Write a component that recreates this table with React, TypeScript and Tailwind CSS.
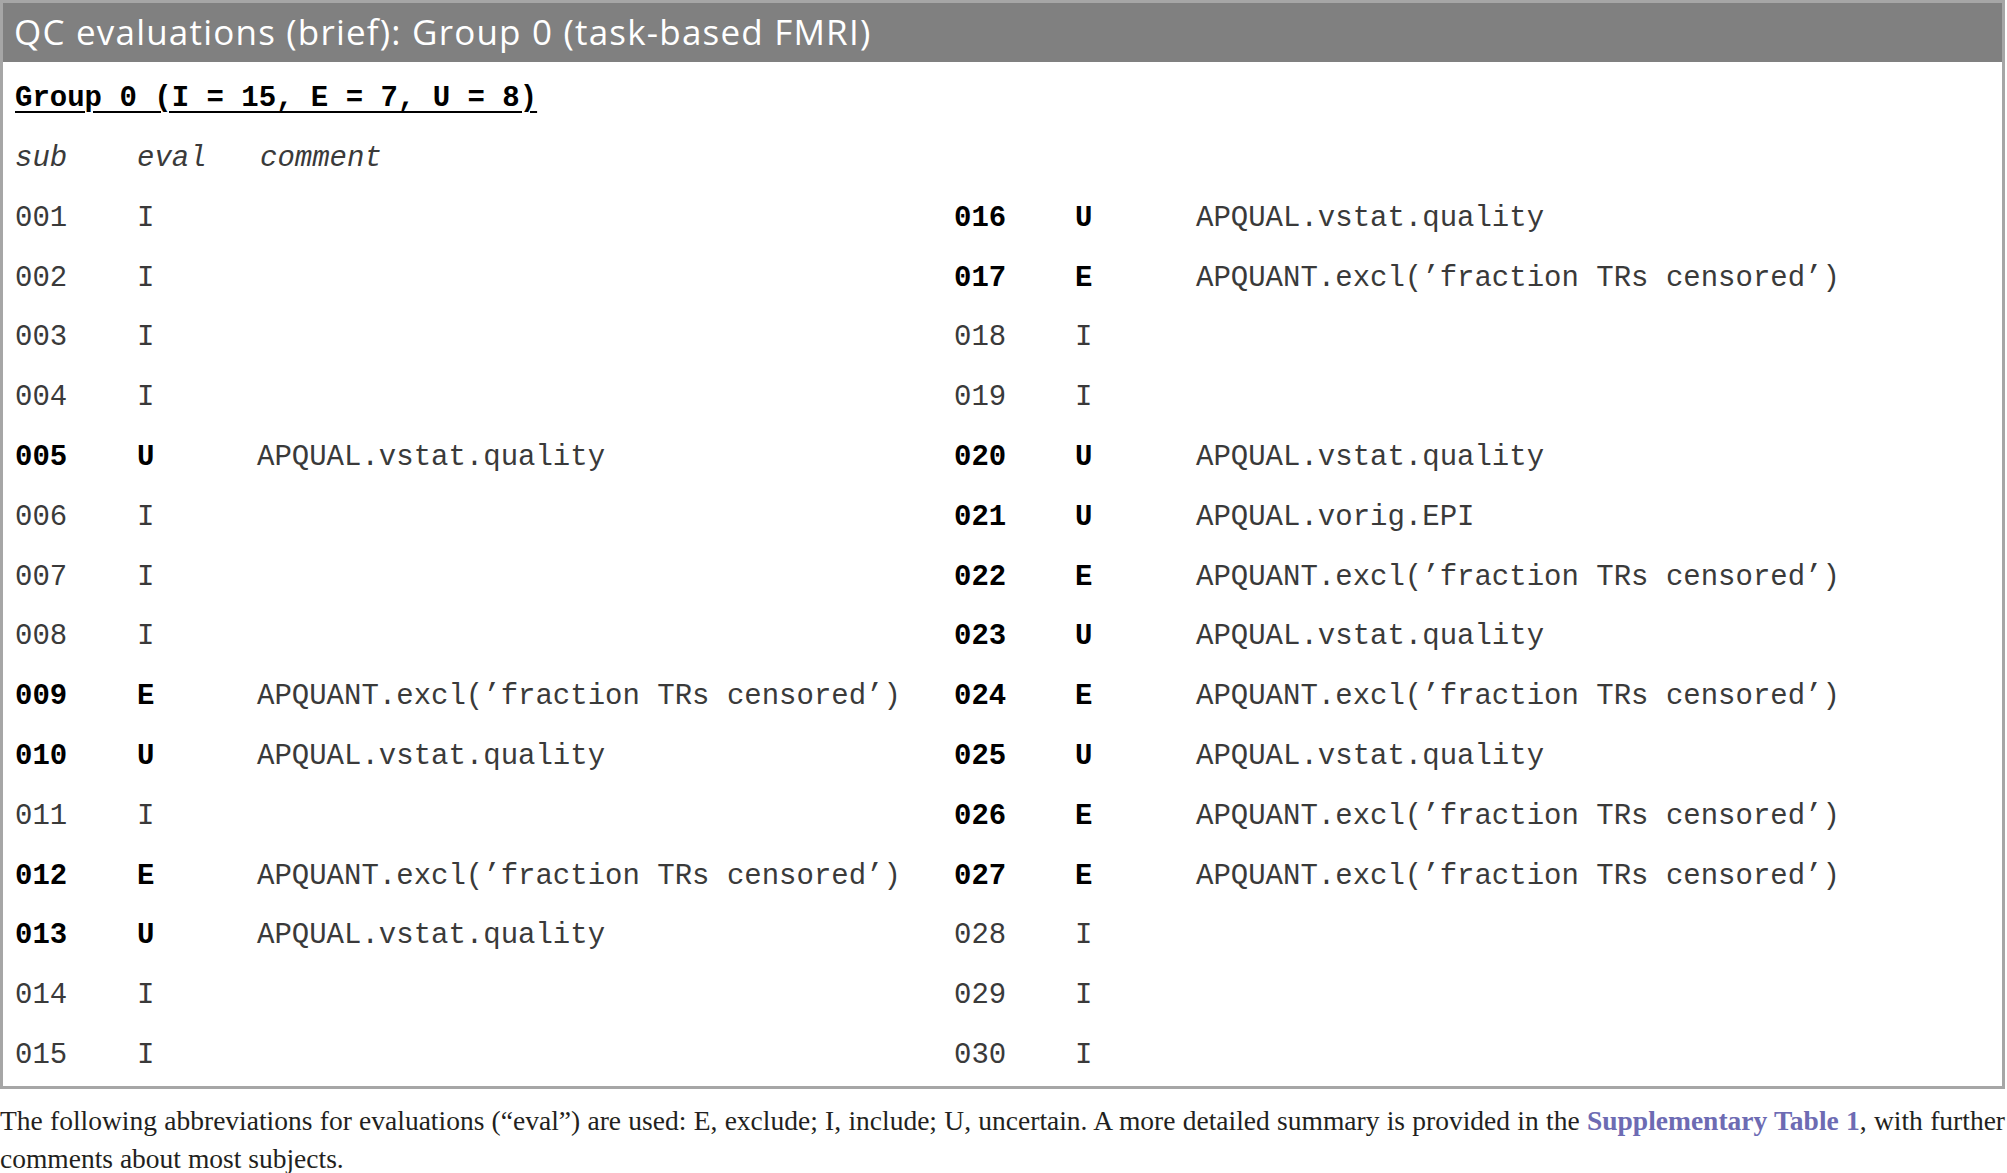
import React from 'react';

type Row = { sub: string; ev: string; comment?: string; bold?: boolean };

const EXCL = "APQUANT.excl(\u2019fraction TRs censored\u2019)";
const VSTAT = 'APQUAL.vstat.quality';

const left: Row[] = [
  { sub: '001', ev: 'I' },
  { sub: '002', ev: 'I' },
  { sub: '003', ev: 'I' },
  { sub: '004', ev: 'I' },
  { sub: '005', ev: 'U', comment: VSTAT, bold: true },
  { sub: '006', ev: 'I' },
  { sub: '007', ev: 'I' },
  { sub: '008', ev: 'I' },
  { sub: '009', ev: 'E', comment: EXCL, bold: true },
  { sub: '010', ev: 'U', comment: VSTAT, bold: true },
  { sub: '011', ev: 'I' },
  { sub: '012', ev: 'E', comment: EXCL, bold: true },
  { sub: '013', ev: 'U', comment: VSTAT, bold: true },
  { sub: '014', ev: 'I' },
  { sub: '015', ev: 'I' },
];

const right: Row[] = [
  { sub: '016', ev: 'U', comment: VSTAT, bold: true },
  { sub: '017', ev: 'E', comment: EXCL, bold: true },
  { sub: '018', ev: 'I' },
  { sub: '019', ev: 'I' },
  { sub: '020', ev: 'U', comment: VSTAT, bold: true },
  { sub: '021', ev: 'U', comment: 'APQUAL.vorig.EPI', bold: true },
  { sub: '022', ev: 'E', comment: EXCL, bold: true },
  { sub: '023', ev: 'U', comment: VSTAT, bold: true },
  { sub: '024', ev: 'E', comment: EXCL, bold: true },
  { sub: '025', ev: 'U', comment: VSTAT, bold: true },
  { sub: '026', ev: 'E', comment: EXCL, bold: true },
  { sub: '027', ev: 'E', comment: EXCL, bold: true },
  { sub: '028', ev: 'I' },
  { sub: '029', ev: 'I' },
  { sub: '030', ev: 'I' },
];

function Cells({ row }: { row: Row }) {
  const weight = row.bold ? 'font-bold text-black' : 'font-normal';
  return (
    <>
      <div className={weight}>{row.sub}</div>
      <div className={weight}>{row.ev}</div>
      <div className="whitespace-pre">{row.comment ?? ''}</div>
    </>
  );
}

export default function App() {
  return (
    <div className="w-[2007px] h-[1173px] bg-white overflow-hidden">
      <div className="w-[2005px] border-t-[3px] border-x-[3px] border-b-[3px] border-[#a6a6a6]">
        <div className="h-[59px] bg-[#808080] flex items-center pl-[11px] pb-[1px] text-white text-[35px] tracking-[1.2px] font-['Open_Sans',sans-serif]">
          QC evaluations (brief): Group 0 (task-based FMRI)
        </div>
        <div className="pt-[7px] pl-[12px] text-[29px] text-[#3a3a3a] font-['Liberation_Mono','Courier_New',monospace]">
          <div className="h-[59.8px] flex items-center">
            <span className="font-bold text-black underline decoration-[2px] underline-offset-[5px]">
              Group 0 (I = 15, E = 7, U = 8)
            </span>
          </div>
          <div className="h-[59.8px] grid grid-cols-[122px_120px_1fr] items-center italic">
            <div>sub</div>
            <div>eval</div>
            <div className="pl-[3px]">comment</div>
          </div>
          {left.map((row, i) => (
            <div
              key={row.sub}
              className="h-[59.8px] grid grid-cols-[122px_120px_697px_121px_121px_1fr] items-center"
            >
              <Cells row={row} />
              <Cells row={right[i]} />
            </div>
          ))}
        </div>
      </div>
      <div className="pt-[13px] text-[27.5px] leading-[38px] text-[#231f20] font-['Liberation_Serif','Times_New_Roman',serif]">
        <div className="whitespace-nowrap text-justify [text-align-last:justify] pr-[2px]">
          The following abbreviations for evaluations (“eval”) are used: E, exclude; I, include; U, uncertain. A more
          detailed summary is provided in the{' '}
          <span className="font-bold text-[#6d6bb3]">Supplementary Table 1</span>, with further
        </div>
        <div>comments about most subjects.</div>
      </div>
    </div>
  );
}
